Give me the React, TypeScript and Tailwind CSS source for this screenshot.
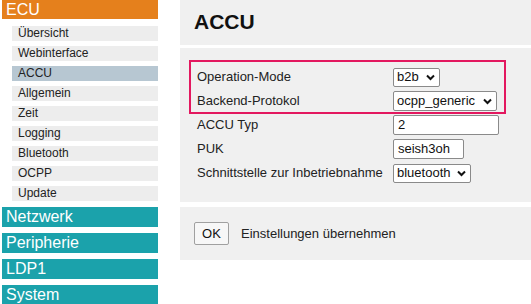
import React from 'react';

const subItems = ['Übersicht', 'Webinterface', 'ACCU', 'Allgemein', 'Zeit', 'Logging', 'Bluetooth', 'OCPP', 'Update'];
const mainItems = ['Netzwerk', 'Peripherie', 'LDP1', 'System'];

function Chevron() {
  return (
    <svg width="9" height="7" viewBox="0 0 9 7" className="ml-auto">
      <path d="M1 1.5 L4.5 5 L8 1.5" fill="none" stroke="#111" strokeWidth="2" />
    </svg>
  );
}

function FakeSelect({ value, width, height = 'h-[19px]' }: { value: string; width: string; height?: string }) {
  return (
    <div className={`${width} ${height} flex items-center border border-[#8a8a8a] rounded-[2px] bg-white pl-[3px] pr-[4px] text-[13px] text-[#111]`}>
      <span>{value}</span>
      <Chevron />
    </div>
  );
}

function FakeInput({ value, width }: { value: string; width: string }) {
  return (
    <div className={`${width} h-[20px] flex items-center border border-[#8a8a8a] rounded-[2px] bg-white pl-[4px] text-[13px] text-[#111]`}>
      {value}
    </div>
  );
}

export default function App() {
  return (
    <div className="w-[531px] h-[304px] overflow-hidden bg-white flex font-['Liberation_Sans',Arial,sans-serif] text-[#222]">
      <nav className="ml-[2px] w-[156px] flex flex-col shrink-0">
        <div className="h-[19px] bg-[#e5801c] text-white text-[16px] leading-[19px] pl-[4px]">ECU</div>
        <div className="flex flex-col gap-[5px] pt-[7px]">
          {subItems.map((s) => (
            <div
              key={s}
              className={`ml-[10px] h-[15px] leading-[15px] pl-[6px] text-[12px] ${s === 'ACCU' ? 'bg-[#b7c7d2]' : 'bg-[#ededed]'}`}
            >
              {s}
            </div>
          ))}
        </div>
        <div className="flex flex-col gap-[6px] pt-[6px]">
          {mainItems.map((m) => (
            <div key={m} className="h-[20px] leading-[20px] bg-[#1ba2ab] text-white text-[16px] pl-[4px] shrink-0">
              {m}
            </div>
          ))}
        </div>
      </nav>

      <main className="ml-[22px] flex-1 flex flex-col">
        <div className="h-[45px] bg-[#f0f0f0] flex items-center pl-[14px]">
          <h1 className="text-[21px] font-bold text-[#111] mt-[-1px]">ACCU</h1>
        </div>
        <div className="relative mt-[3px] bg-[#f0f0f0] pt-[17px] pb-[17px] pl-[17px]">
          <div className="absolute left-[9px] top-[12px] w-[317px] h-[54px] border-2 border-[#e3185f]" />
          <div className="grid grid-cols-[196px_auto] auto-rows-[24px] items-center text-[13px]">
            <span>Operation-Mode</span>
            <FakeSelect value="b2b" width="w-[47px]" />
            <span>Backend-Protokol</span>
            <FakeSelect value="ocpp_generic" width="w-[104px]" height="h-[20px]" />
            <span>ACCU Typ</span>
            <FakeInput value="2" width="w-[106px]" />
            <span>PUK</span>
            <FakeInput value="seish3oh" width="w-[71px]" />
            <span className="whitespace-nowrap">Schnittstelle zur Inbetriebnahme</span>
            <FakeSelect value="bluetooth" width="w-[78px]" />
          </div>
        </div>
        <div className="mt-[5px] h-[53px] bg-[#f0f0f0] flex items-center pl-[14px] gap-[12px]">
          <button className="w-[35px] h-[23px] border border-[#a0a0a0] rounded-[2px] bg-[#f7f7f7] text-[13px] text-[#111]">OK</button>
          <span className="text-[13px]">Einstellungen übernehmen</span>
        </div>
      </main>
    </div>
  );
}
